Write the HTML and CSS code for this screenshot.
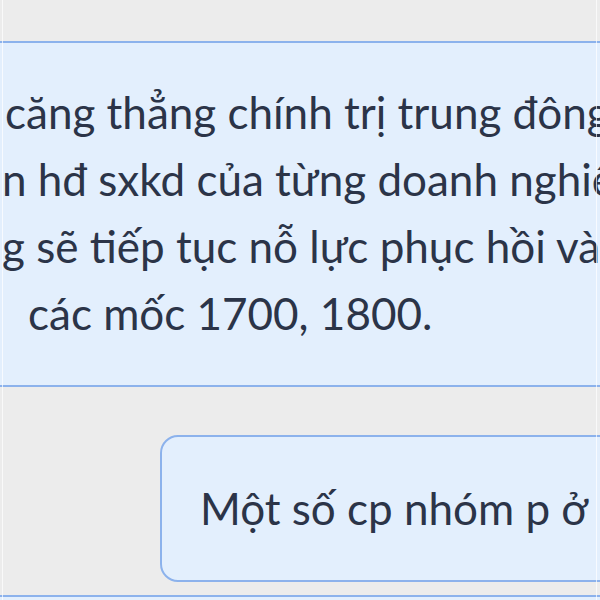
FILE: index.html
```html
<!DOCTYPE html>
<html lang="vi">
<head>
	<meta charset="UTF-8">
	<title>Chat</title>
	<link rel="stylesheet" href="styles.css">
</head>
<body>
<div class="thread">
	<div class="msg bot">
		<p class="text">
			<span class="line l1">căng thẳng chính trị trung đông</span>
			<span class="line l2">n hđ sxkd của từng doanh nghiệp</span>
			<span class="line l3">g sẽ tiếp tục nỗ lực phục hồi và</span>
			<span class="line l4">các mốc 1700, 1800.</span>
		</p>
	</div>
	<div class="msg user">
		<p class="text">
			<span class="line">Một số cp nhóm p ở</span>
		</p>
	</div>
	<div class="msg bot next"></div>
</div>
<div class="edge left"></div>
<div class="edge right"></div>
</body>
</html>
```

FILE: styles.css
```css
*{
	padding: 0;
	margin: 0;
	box-sizing: border-box;
}
html{
	overflow: hidden;
}
body{
	width: 600px;
	height: 600px;
	overflow: hidden;
	background-color: #ececec;
	font-family: Lato, "Noto Sans", sans-serif;
	color: #2b3448;
	position: relative;
}
.thread{
	padding-top: 41px;
	display: flex;
	flex-direction: column;
	align-items: flex-start;
}
.msg{
	background-color: #e3effd;
	border: 2px solid #8cb2ec;
	border-radius: 18px;
}
.text{
	font-size: 44px;
	line-height: 67px;
	white-space: nowrap;
}
.line{
	display: block;
}
.bot{
	width: 700px;
	margin-left: -40px;
	padding: 36px 0 38px 40px;
	overflow: hidden;
}
.l1{
	margin-left: 3px;
}
.l4{
	margin-left: 26px;
}
.user{
	width: 500px;
	margin-top: 48px;
	margin-left: 160px;
	padding: 38px 0 38px 38px;
	overflow: hidden;
}
.next{
	margin-top: 13px;
	height: 80px;
}
.edge{
	position: absolute;
	top: 0;
	bottom: 0;
	width: 1px;
	background-color: rgba(255, 255, 255, 0.7);
}
.edge.left{
	left: 2px;
}
.edge.right{
	left: 596px;
}
```
